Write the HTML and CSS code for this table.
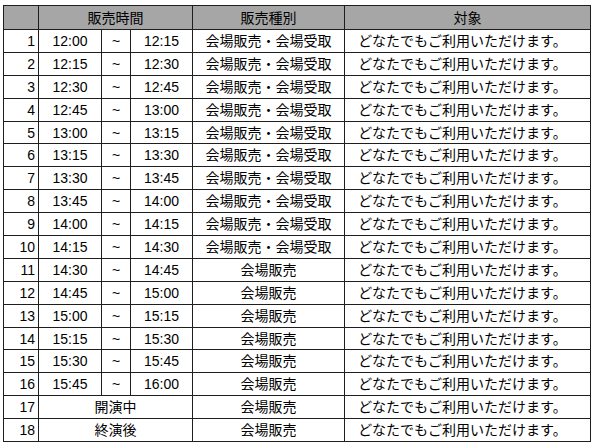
FILE: index.html
```html
<!DOCTYPE html>
<html lang="ja">
<head>
<meta charset="utf-8">
<link rel="stylesheet" href="styles.css">
</head>
<body>
<div class="wrap">
<table class="sched">
<colgroup>
<col class="c-no"><col class="c-from"><col class="c-tilde"><col class="c-to"><col class="c-type"><col class="c-target">
</colgroup>
<thead>
<tr><th></th><th colspan="3">販売時間</th><th>販売種別</th><th>対象</th></tr>
</thead>
<tbody>
<tr><td class="no">1</td><td>12:00</td><td>~</td><td>12:15</td><td>会場販売・会場受取</td><td class="tg">どなたでもご利用いただけます。</td></tr>
<tr><td class="no">2</td><td>12:15</td><td>~</td><td>12:30</td><td>会場販売・会場受取</td><td class="tg">どなたでもご利用いただけます。</td></tr>
<tr><td class="no">3</td><td>12:30</td><td>~</td><td>12:45</td><td>会場販売・会場受取</td><td class="tg">どなたでもご利用いただけます。</td></tr>
<tr><td class="no">4</td><td>12:45</td><td>~</td><td>13:00</td><td>会場販売・会場受取</td><td class="tg">どなたでもご利用いただけます。</td></tr>
<tr><td class="no">5</td><td>13:00</td><td>~</td><td>13:15</td><td>会場販売・会場受取</td><td class="tg">どなたでもご利用いただけます。</td></tr>
<tr><td class="no">6</td><td>13:15</td><td>~</td><td>13:30</td><td>会場販売・会場受取</td><td class="tg">どなたでもご利用いただけます。</td></tr>
<tr><td class="no">7</td><td>13:30</td><td>~</td><td>13:45</td><td>会場販売・会場受取</td><td class="tg">どなたでもご利用いただけます。</td></tr>
<tr><td class="no">8</td><td>13:45</td><td>~</td><td>14:00</td><td>会場販売・会場受取</td><td class="tg">どなたでもご利用いただけます。</td></tr>
<tr><td class="no">9</td><td>14:00</td><td>~</td><td>14:15</td><td>会場販売・会場受取</td><td class="tg">どなたでもご利用いただけます。</td></tr>
<tr><td class="no">10</td><td>14:15</td><td>~</td><td>14:30</td><td>会場販売・会場受取</td><td class="tg">どなたでもご利用いただけます。</td></tr>
<tr><td class="no">11</td><td>14:30</td><td>~</td><td>14:45</td><td>会場販売</td><td class="tg">どなたでもご利用いただけます。</td></tr>
<tr><td class="no">12</td><td>14:45</td><td>~</td><td>15:00</td><td>会場販売</td><td class="tg">どなたでもご利用いただけます。</td></tr>
<tr><td class="no">13</td><td>15:00</td><td>~</td><td>15:15</td><td>会場販売</td><td class="tg">どなたでもご利用いただけます。</td></tr>
<tr><td class="no">14</td><td>15:15</td><td>~</td><td>15:30</td><td>会場販売</td><td class="tg">どなたでもご利用いただけます。</td></tr>
<tr><td class="no">15</td><td>15:30</td><td>~</td><td>15:45</td><td>会場販売</td><td class="tg">どなたでもご利用いただけます。</td></tr>
<tr><td class="no">16</td><td>15:45</td><td>~</td><td>16:00</td><td>会場販売</td><td class="tg">どなたでもご利用いただけます。</td></tr>
<tr><td class="no">17</td><td colspan="3">開演中</td><td>会場販売</td><td class="tg">どなたでもご利用いただけます。</td></tr>
<tr><td class="no">18</td><td colspan="3">終演後</td><td>会場販売</td><td class="tg">どなたでもご利用いただけます。</td></tr>
</tbody>
</table>
</div>
</body>
</html>
```
FILE: styles.css
```css
html, body {
  margin: 0;
  padding: 0;
  background: #ffffff;
}
.wrap {
  padding: 5px 0 0 3px;
}
.sched {
  border-collapse: collapse;
  table-layout: fixed;
  width: 587px;
  font-family: "Liberation Sans", "Noto Sans CJK JP", sans-serif;
  font-size: 14px;
  color: #000;
}
.c-no { width: 35px; }
.c-from { width: 63px; }
.c-tilde { width: 29px; }
.c-to { width: 62px; }
.c-type { width: 152px; }
.c-target { width: 246px; }
.sched th, .sched td {
  border: 1px solid #1e1e1e;
  padding: 0;
  text-align: center;
  font-weight: normal;
  line-height: 16px;
  white-space: nowrap;
}
.sched thead th {
  background: #a6a6a6;
  height: 23px;
}
.sched tbody td {
  height: 21.9px;
}
.sched td.no {
  text-align: right;
  padding-right: 3px;
}
.sched td.tg {
  padding-right: 10px;
}
```
